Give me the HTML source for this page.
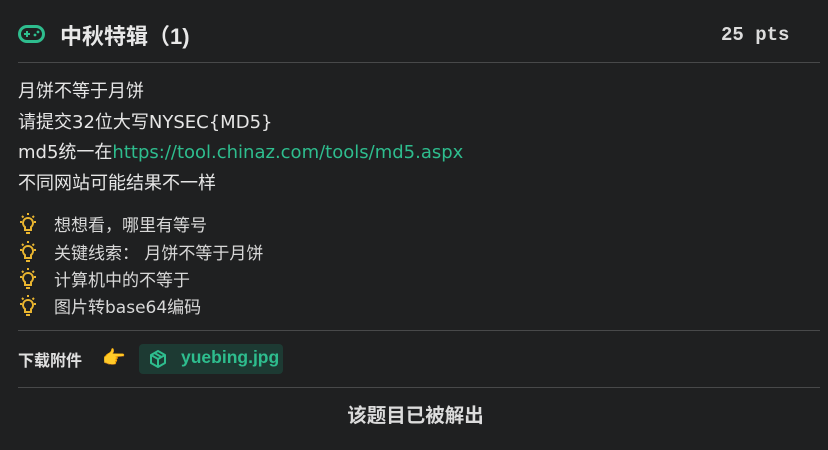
<!DOCTYPE html><html><head><style>
body{margin:0;width:828px;height:450px;background:#1f2021;color:#e6e6e6;font-family:"Liberation Sans","Noto Sans CJK SC",sans-serif;position:relative;overflow:hidden}
.a{position:absolute;white-space:nowrap}
.hr{position:absolute;left:18px;width:802px;height:1px;background:#48494a}
.hint{position:absolute;left:18px;font-size:17px;color:#d8d8d8;display:flex;align-items:center;font-family:"DejaVu Sans","Noto Sans CJK SC",sans-serif}
.hint svg{margin-right:16px}
</style></head><body>
<svg class="a" style="left:18px;top:25px" width="27" height="18" viewBox="0 0 27 18"><rect x="1.5" y="1.5" width="24" height="15" rx="7.5" fill="none" stroke="#2ebd8e" stroke-width="3"/><path d="M6 9h6M9 6v6" stroke="#2ebd8e" stroke-width="2"/><circle cx="17" cy="10" r="1.4" fill="#2ebd8e"/><circle cx="20" cy="7" r="1.4" fill="#2ebd8e"/></svg>
<div class="a" style="left:60px;top:19px;font-size:22px;font-weight:bold;color:#e8e8e8">中秋特辑（1)</div>
<div class="a" style="left:721px;top:24px;font-size:19px;font-weight:bold;font-family:'Liberation Mono',monospace;color:#dcdcdc">25 pts</div>
<div class="hr" style="top:62px"></div>
<div class="a" style="left:18px;top:77px;font-size:18px;line-height:30.5px;color:#e6e6e6;font-family:'DejaVu Sans','Noto Sans CJK SC',sans-serif">月饼不等于月饼<br>请提交32位大写NYSEC{MD5}<br>md5统一在<span style="color:#2ebd8e">https://tool.chinaz.com/tools/md5.aspx</span><br>不同网站可能结果不一样</div>
<div class="hint" style="top:211px"><svg width="20" height="22" viewBox="0 0 20 22"><g stroke="#e9b530" stroke-width="2" fill="none"><path d="M10 5a5 5 0 0 0-3 9v3h6v-3a5 5 0 0 0-3-9z"/><path d="M8 20h4M10 0v2M2 9h2M16 9h2M4 3l1.5 1.5M16 3l-1.5 1.5"/></g></svg>想想看，哪里有等号</div>
<div class="hint" style="top:239px"><svg width="20" height="22" viewBox="0 0 20 22"><g stroke="#e9b530" stroke-width="2" fill="none"><path d="M10 5a5 5 0 0 0-3 9v3h6v-3a5 5 0 0 0-3-9z"/><path d="M8 20h4M10 0v2M2 9h2M16 9h2M4 3l1.5 1.5M16 3l-1.5 1.5"/></g></svg>关键线索： 月饼不等于月饼</div>
<div class="hint" style="top:266px"><svg width="20" height="22" viewBox="0 0 20 22"><g stroke="#e9b530" stroke-width="2" fill="none"><path d="M10 5a5 5 0 0 0-3 9v3h6v-3a5 5 0 0 0-3-9z"/><path d="M8 20h4M10 0v2M2 9h2M16 9h2M4 3l1.5 1.5M16 3l-1.5 1.5"/></g></svg>计算机中的不等于</div>
<div class="hint" style="top:293px"><svg width="20" height="22" viewBox="0 0 20 22"><g stroke="#e9b530" stroke-width="2" fill="none"><path d="M10 5a5 5 0 0 0-3 9v3h6v-3a5 5 0 0 0-3-9z"/><path d="M8 20h4M10 0v2M2 9h2M16 9h2M4 3l1.5 1.5M16 3l-1.5 1.5"/></g></svg>图片转base64编码</div>
<div class="hr" style="top:330px"></div>
<div class="a" style="left:18px;top:347px;font-size:16px;font-weight:bold;color:#e0e0e0">下载附件</div>
<div class="a" style="left:102px;top:346px;font-size:19px">👉</div>
<div class="a" style="left:139px;top:344px;width:144px;height:30px;background:#1d3a33;border-radius:4px"></div>
<svg class="a" style="left:148px;top:349px" width="20" height="20" viewBox="0 0 20 20"><g stroke="#2ebd8e" stroke-width="2" fill="none" stroke-linejoin="round"><path d="M10 2l7 4v8l-7 4-7-4V6z"/><path d="M3 6l7 4 7-4M10 10v8M6.5 4l7 4"/></g></svg>
<div class="a" style="left:181px;top:347px;font-size:17.5px;font-weight:bold;color:#2ebd8e">yuebing.jpg</div>
<div class="hr" style="top:387px"></div>
<div class="a" style="left:0;width:831px;text-align:center;top:399px;font-size:19.5px;font-weight:bold;color:#dcdcdc">该题目已被解出</div>
</body></html>
